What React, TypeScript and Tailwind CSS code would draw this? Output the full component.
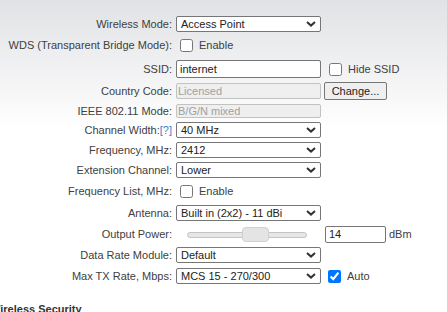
import React from "react";

function Chevron() {
  return (
    <svg width="10" height="6" viewBox="0 0 10 6" className="shrink-0">
      <path d="M1 1L5 4.6L9 1" stroke="#333" strokeWidth="2" fill="none" />
    </svg>
  );
}

function Select({ value }: { value: string }) {
  return (
    <div className="w-[145px] h-[16px] border border-[#767676] rounded-[2px] bg-white flex items-center justify-between pl-[4px] pr-[4px] text-[#222]">
      <span>{value}</span>
      <Chevron />
    </div>
  );
}

function Row({
  label,
  cls,
  children,
}: {
  label: React.ReactNode;
  cls: string;
  children: React.ReactNode;
}) {
  return (
    <div className={"flex items-center " + cls}>
      <div className="w-[172px] shrink-0 text-right whitespace-nowrap">{label}</div>
      <div className="ml-[4px] flex items-center">{children}</div>
    </div>
  );
}

function Check({ checked = false }: { checked?: boolean }) {
  return (
    <input
      type="checkbox"
      defaultChecked={checked}
      className="m-0 w-[13px] h-[13px] accent-[#0075ff] shrink-0"
    />
  );
}

export default function App() {
  return (
    <div className="w-full h-[312px] overflow-hidden bg-[linear-gradient(to_bottom,#e1e2e5_0px,#ffffff_130px)] font-['Liberation_Sans',Arial,sans-serif] text-[11px] leading-[13px] text-[#404040] pt-[16px]">
      <Row label="Wireless Mode:" cls="h-[16px]">
        <Select value="Access Point" />
      </Row>
      <Row label="WDS (Transparent Bridge Mode):" cls="mt-[7px] h-[13px]">
        <div className="ml-[4px] flex items-center">
          <Check />
          <span className="ml-[6px]">Enable</span>
        </div>
      </Row>
      <Row label="SSID:" cls="mt-[8px] h-[18px]">
        <div className="w-[145px] h-[18px] border border-[#767676] rounded-[2px] bg-white flex items-center pl-[3px] text-[#222]">
          internet
        </div>
        <div className="ml-[8px] flex items-center">
          <Check />
          <span className="ml-[6px]">Hide SSID</span>
        </div>
      </Row>
      <Row label="Country Code:" cls="mt-[4px] h-[18px]">
        <div className="w-[145px] h-[16px] border border-[#c2c2c2] rounded-[2px] bg-[#efefef] flex items-center pl-[1px] text-[#a0a0a0]">
          Licensed
        </div>
        <div className="ml-[3px] w-[63px] h-[18px] border border-[#767676] rounded-[2px] bg-[#efefef] flex items-center justify-center text-[#222]">
          Change...
        </div>
      </Row>
      <Row label="IEEE 802.11 Mode:" cls="mt-[4px] h-[14px]">
        <div className="w-[145px] h-[14px] border border-[#c2c2c2] rounded-[2px] bg-[#efefef] flex items-center pl-[1px] text-[#a0a0a0]">
          B/G/N mixed
        </div>
      </Row>
      <Row
        label={
          <>
            Channel Width:<span className="text-[#3a7fc8]">[?]</span>
          </>
        }
        cls="mt-[4px] h-[16px]"
      >
        <Select value="40 MHz" />
      </Row>
      <Row label="Frequency, MHz:" cls="mt-[4px] h-[16px]">
        <Select value="2412" />
      </Row>
      <Row label="Extension Channel:" cls="mt-[4px] h-[16px]">
        <Select value="Lower" />
      </Row>
      <Row label="Frequency List, MHz:" cls="mt-[7px] h-[13px]">
        <div className="ml-[4px] flex items-center">
          <Check />
          <span className="ml-[6px]">Enable</span>
        </div>
      </Row>
      <Row label="Antenna:" cls="mt-[7px] h-[16px]">
        <Select value="Built in (2x2) - 11 dBi" />
      </Row>
      <Row label="Output Power:" cls="mt-[5px] h-[17px]">
        <div className="w-[145px] h-[17px] flex items-center">
          <div className="relative ml-[11px] w-[120px] h-[6px] rounded-full border border-[#c4c4c4] bg-[#e6e6e6]">
            <div className="absolute left-[54px] top-[-6px] w-[27px] h-[15px] rounded-[4px] border border-[#d0d0d0] bg-[#e4e4e4]" />
          </div>
        </div>
        <div className="ml-[4px] w-[61px] h-[17px] border border-[#767676] rounded-[2px] bg-white flex items-center pl-[3px] text-[#222]">
          14
        </div>
        <span className="ml-[3px]">dBm</span>
      </Row>
      <Row label="Data Rate Module:" cls="mt-[4px] h-[16px]">
        <Select value="Default" />
      </Row>
      <Row label="Max TX Rate, Mbps:" cls="mt-[5px] h-[16px]">
        <Select value="MCS 15 - 270/300" />
        <div className="ml-[7px] flex items-center">
          <Check checked />
          <span className="ml-[6px]">Auto</span>
        </div>
      </Row>
      <div className="mt-[19px] ml-[-10px] font-bold text-[11px] leading-[13px] text-[#333] whitespace-nowrap">
        Wireless Security
      </div>
    </div>
  );
}
